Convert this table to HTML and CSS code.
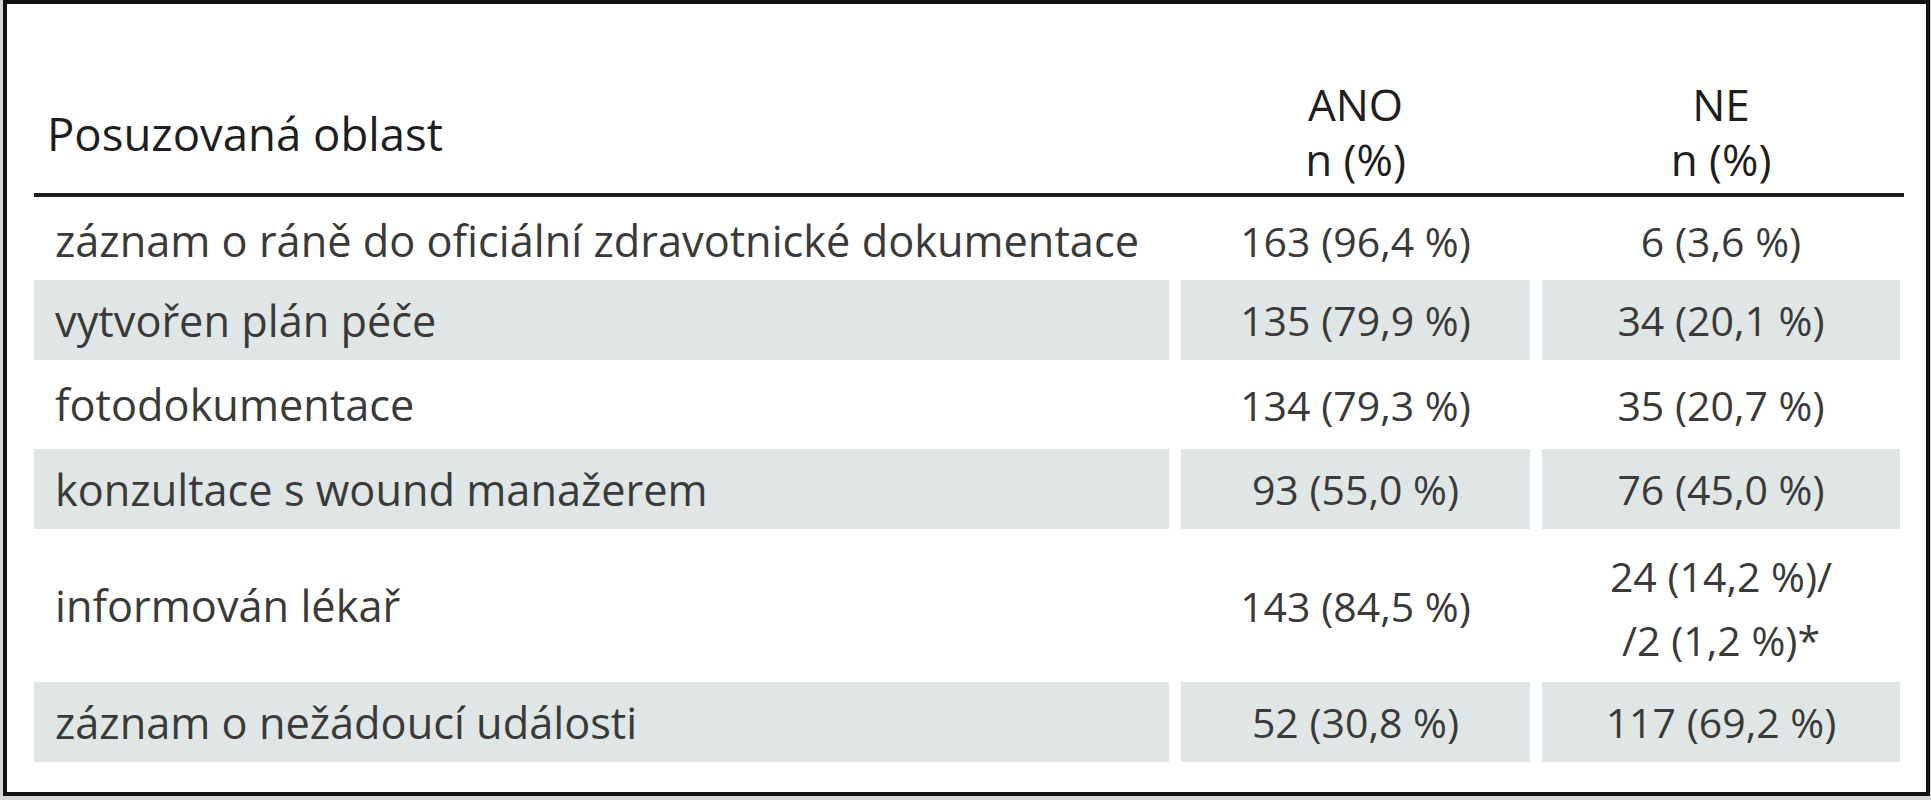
FILE: index.html
```html
<!DOCTYPE html>
<html lang="cs">
<head>
<meta charset="utf-8">
<title>Tabulka</title>
<link rel="stylesheet" href="styles.css">
</head>
<body>
<div class="frame">
  <div class="table">
    <div class="head">
      <div class="hcell first">Posuzovaná oblast</div>
      <div class="hcell">ANO<br>n (%)</div>
      <div class="hcell">NE<br>n (%)</div>
    </div>
    <div class="row r1">
      <div class="cell first">záznam o ráně do oficiální zdravotnické dokumentace</div>
      <div class="cell">163 (96,4 %)</div>
      <div class="cell">6 (3,6 %)</div>
    </div>
    <div class="row shade">
      <div class="cell first">vytvořen plán péče</div>
      <div class="cell">135 (79,9 %)</div>
      <div class="cell">34 (20,1 %)</div>
    </div>
    <div class="row r3">
      <div class="cell first">fotodokumentace</div>
      <div class="cell">134 (79,3 %)</div>
      <div class="cell">35 (20,7 %)</div>
    </div>
    <div class="row shade">
      <div class="cell first">konzultace s wound manažerem</div>
      <div class="cell">93 (55,0 %)</div>
      <div class="cell">76 (45,0 %)</div>
    </div>
    <div class="row tall">
      <div class="cell first">informován lékař</div>
      <div class="cell">143 (84,5 %)</div>
      <div class="cell two">24 (14,2 %)/<br>/2 (1,2 %)*</div>
    </div>
    <div class="row shade">
      <div class="cell first">záznam o nežádoucí události</div>
      <div class="cell">52 (30,8 %)</div>
      <div class="cell">117 (69,2 %)</div>
    </div>
  </div>
</div>
</body>
</html>
```

FILE: styles.css
```css
html, body {
  margin: 0;
  padding: 0;
}
body {
  background: #d6d6d6;
  width: 1931px;
  height: 800px;
  overflow: hidden;
  font-family: "Open Sans", "Noto Sans", sans-serif;
}
.frame {
  box-sizing: border-box;
  width: 1927px;
  height: 796px;
  margin-left: 3px;
  border: 4px solid #111;
  background: #fff;
  padding: 0 22px 0 27px;
}
.table {
  width: 1870px;
  display: flex;
  flex-direction: column;
  gap: 2px;
}
.head,
.row {
  display: grid;
  grid-template-columns: 1135px 349px 358px;
  column-gap: 12px;
}
.head {
  box-sizing: border-box;
  height: 193px;
  padding-top: 70px;
  border-bottom: 4px solid #1c1c1c;
  align-items: center;
  margin-bottom: -2px;
}
.hcell {
  font-size: 44px;
  line-height: 55px;
  color: #1e1e1e;
  text-align: center;
  padding-bottom: 3px;
}
.hcell.first {
  text-align: left;
  padding-left: 13px;
  padding-bottom: 0;
  font-size: 45.5px;
}
.row {
  height: 80px;
}
.row.r1 {
  height: 81px;
}
.row.r1 .cell {
  padding-top: 6px;
  box-sizing: border-box;
}
.row.r3 {
  height: 85px;
}
.row.tall {
  height: 149px;
}
.cell {
  display: flex;
  align-items: center;
  justify-content: center;
  text-align: center;
  font-size: 41px;
  color: #3a3a3a;
  white-space: nowrap;
}
.cell.first {
  justify-content: flex-start;
  padding-left: 21px;
  font-size: 43.3px;
}
.cell.two {
  line-height: 64px;
  padding-top: 4px;
}
.shade .cell {
  background: #dfe6e5;
}
```
